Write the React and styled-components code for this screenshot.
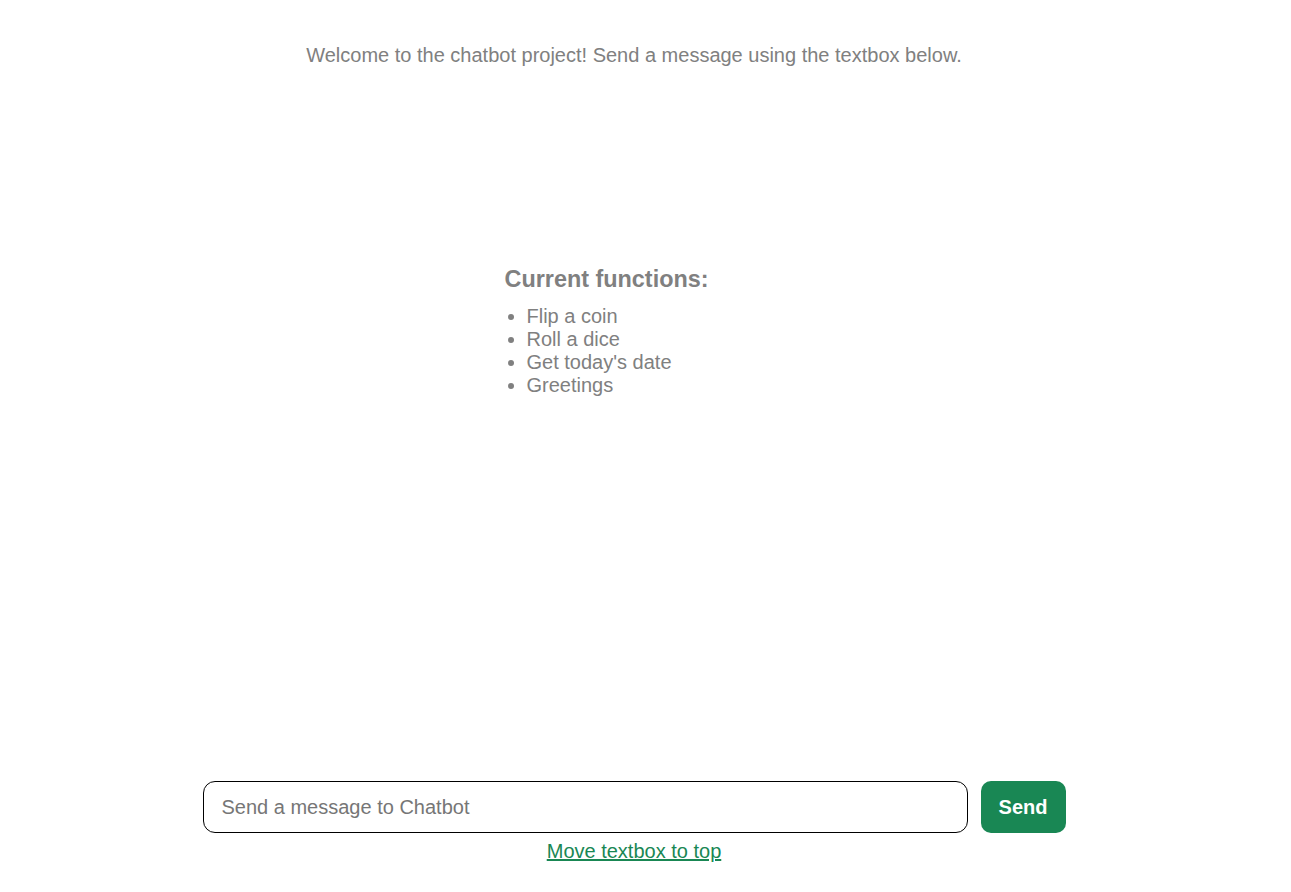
import React from "react";
import styled, { createGlobalStyle } from "styled-components";

const Global = createGlobalStyle`
  html, body { margin: 0; padding: 0; background: #fff; }
  body { font-family: "Liberation Sans", Arial, sans-serif; }
`;

const Page = styled.div`
  width: 1268px;
  height: 892px;
  display: flex;
  flex-direction: column;
  align-items: center;
`;

const Welcome = styled.p`
  margin: 44px 0 0;
  font-size: 20px;
  line-height: 23px;
  color: #808080;
  text-align: center;
`;

const Middle = styled.div`
  flex: 1;
  display: flex;
  flex-direction: column;
  align-items: flex-start;
  padding-top: 199px;
  width: 203px;
  margin-left: -56px;
`;

const Heading = styled.h3`
  margin: 0;
  font-size: 23.4px;
  line-height: 27px;
  font-weight: bold;
  color: #808080;
  white-space: nowrap;
`;

const List = styled.ul`
  margin: 12px 0 0;
  padding-left: 22px;
  color: #808080;
  font-size: 20px;
  line-height: 23px;
  white-space: nowrap;
`;

const InputRow = styled.div`
  display: flex;
  gap: 13px;
  width: 863px;
`;

const Input = styled.input`
  flex: 1;
  height: 52px;
  box-sizing: border-box;
  border: 1px solid #000;
  border-radius: 12px;
  padding: 0 18px;
  font-family: "Liberation Sans", Arial, sans-serif;
  font-size: 20px;
  outline: none;
  &::placeholder { color: #767676; }
`;

const SendButton = styled.button`
  width: 85px;
  height: 52px;
  border: none;
  border-radius: 10px;
  background: #198754;
  color: #fff;
  font-family: "Liberation Sans", Arial, sans-serif;
  font-size: 20px;
  font-weight: bold;
  cursor: pointer;
`;

const MoveLink = styled.a`
  margin: 7px 0 29px;
  color: #198754;
  font-size: 20px;
  line-height: 23px;
  text-decoration: underline;
  cursor: pointer;
`;

export default function App() {
  return (
    <>
      <Global />
      <Page>
        <Welcome>Welcome to the chatbot project! Send a message using the textbox below.</Welcome>
        <Middle>
          <Heading>Current functions:</Heading>
          <List>
            <li>Flip a coin</li>
            <li>Roll a dice</li>
            <li>Get today's date</li>
            <li>Greetings</li>
          </List>
        </Middle>
        <InputRow>
          <Input placeholder="Send a message to Chatbot" />
          <SendButton>Send</SendButton>
        </InputRow>
        <MoveLink>Move textbox to top</MoveLink>
      </Page>
    </>
  );
}
